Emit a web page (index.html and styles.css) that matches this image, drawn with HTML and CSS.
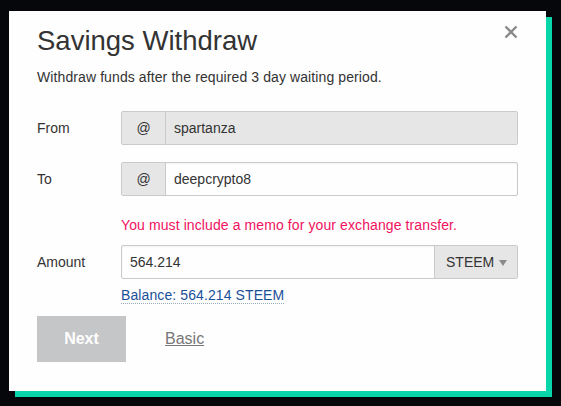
FILE: index.html
```html
<!DOCTYPE html>
<html>
<head>
<meta charset="utf-8">
<link rel="stylesheet" href="styles.css">
</head>
<body>
<div class="modal">
  <button class="close" aria-label="Close">
    <svg width="14" height="14" viewBox="0 0 14 14"><path d="M1.5 1.5 L12.5 12.5 M12.5 1.5 L1.5 12.5" stroke="#8a8a8a" stroke-width="2.4" fill="none"/></svg>
  </button>
  <h1 class="title">Savings Withdraw</h1>
  <p class="subtitle">Withdraw funds after the required 3 day waiting period.</p>
  <div class="form">
    <div class="row">
      <label class="label">From</label>
      <div class="group">
        <span class="addon">@</span>
        <span class="field disabled">spartanza</span>
      </div>
    </div>
    <div class="row">
      <label class="label">To</label>
      <div class="group">
        <span class="addon">@</span>
        <span class="field">deepcrypto8</span>
      </div>
    </div>
    <div class="row msg-row">
      <span></span>
      <div class="error">You must include a memo for your exchange transfer.</div>
    </div>
    <div class="row amount-row">
      <label class="label">Amount</label>
      <div class="group">
        <span class="field">564.214</span>
        <span class="select">STEEM<span class="caret"></span></span>
      </div>
    </div>
    <div class="row balance-row">
      <span></span>
      <div><a class="balance">Balance: 564.214 STEEM</a></div>
    </div>
  </div>
  <div class="actions">
    <button class="next">Next</button>
    <a class="basic">Basic</a>
  </div>
</div>
</body>
</html>
```
FILE: styles.css
```css
html, body {
  margin: 0;
  padding: 0;
  background: #05070a;
  height: 100%;
}
body {
  font-family: "Liberation Sans", Arial, sans-serif;
  color: #333;
  padding: 11px 0 0 9px;
  box-sizing: border-box;
}
.modal {
  position: relative;
  width: 537px;
  height: 380px;
  box-sizing: border-box;
  background: #fefefe;
  box-shadow: 6px 6px 0 #06d6a9;
  padding: 14px 28px 0 28px;
}
.close {
  position: absolute;
  top: 14px;
  right: 28px;
  border: 0;
  background: none;
  padding: 0;
  width: 14px;
  height: 14px;
  display: block;
}
.close svg { display: block; }
.title {
  margin: 0;
  font-weight: normal;
  font-size: 27.5px;
  line-height: 32px;
  color: #333;
}
.subtitle {
  margin: 10px 0 0 0;
  font-size: 14px;
  line-height: 20px;
  letter-spacing: 0.1px;
  color: #333;
}
.form {
  margin-top: 24px;
  display: flex;
  flex-direction: column;
  gap: 17px;
}
.row {
  display: grid;
  grid-template-columns: 84px 397px;
  align-items: center;
}
.label {
  font-size: 14px;
  color: #333;
}
.group {
  display: flex;
  height: 34px;
  box-sizing: border-box;
  border: 1px solid #cacaca;
  border-radius: 2px;
  font-size: 14px;
  color: #333;
  box-shadow: inset 0 1px 2px rgba(0,0,0,0.05);
}
.addon {
  width: 43px;
  flex: none;
  display: flex;
  align-items: center;
  justify-content: center;
  background: #e6e6e6;
  border-right: 1px solid #cacaca;
}
.field {
  flex: 1;
  display: flex;
  align-items: center;
  padding: 0 8px;
}
.field.disabled {
  background: #e6e6e6;
}
.msg-row { margin-top: 2px; }
.error {
  font-size: 14px;
  line-height: 20px;
  letter-spacing: 0.1px;
  color: #f0125e;
}
.amount-row { margin-top: -7px; }
.select {
  width: 83px;
  flex: none;
  box-sizing: border-box;
  display: flex;
  align-items: center;
  padding-left: 11px;
  background: #e6e6e6;
  border-left: 1px solid #cacaca;
  font-size: 14px;
  color: #333;
  position: relative;
}
.caret {
  position: absolute;
  right: 10px;
  top: 14px;
  width: 0;
  height: 0;
  border-left: 4px solid transparent;
  border-right: 4px solid transparent;
  border-top: 6px solid #8a8a8a;
}
.balance-row { margin-top: -11px; }
.balance {
  font-size: 14px;
  line-height: 20px;
  letter-spacing: 0.1px;
  color: #1a5099;
  text-decoration: none;
  border-bottom: 1px dotted #9ab;
}
.actions {
  margin-top: 11px;
  display: flex;
  align-items: center;
  gap: 39px;
}
.next {
  width: 89px;
  height: 46px;
  border: 0;
  padding: 0;
  background: #c5c6c8;
  color: #fefefe;
  font-family: "Liberation Sans", Arial, sans-serif;
  font-weight: bold;
  font-size: 16px;
}
.basic {
  font-size: 16px;
  color: #777;
  text-decoration: underline;
}
```
